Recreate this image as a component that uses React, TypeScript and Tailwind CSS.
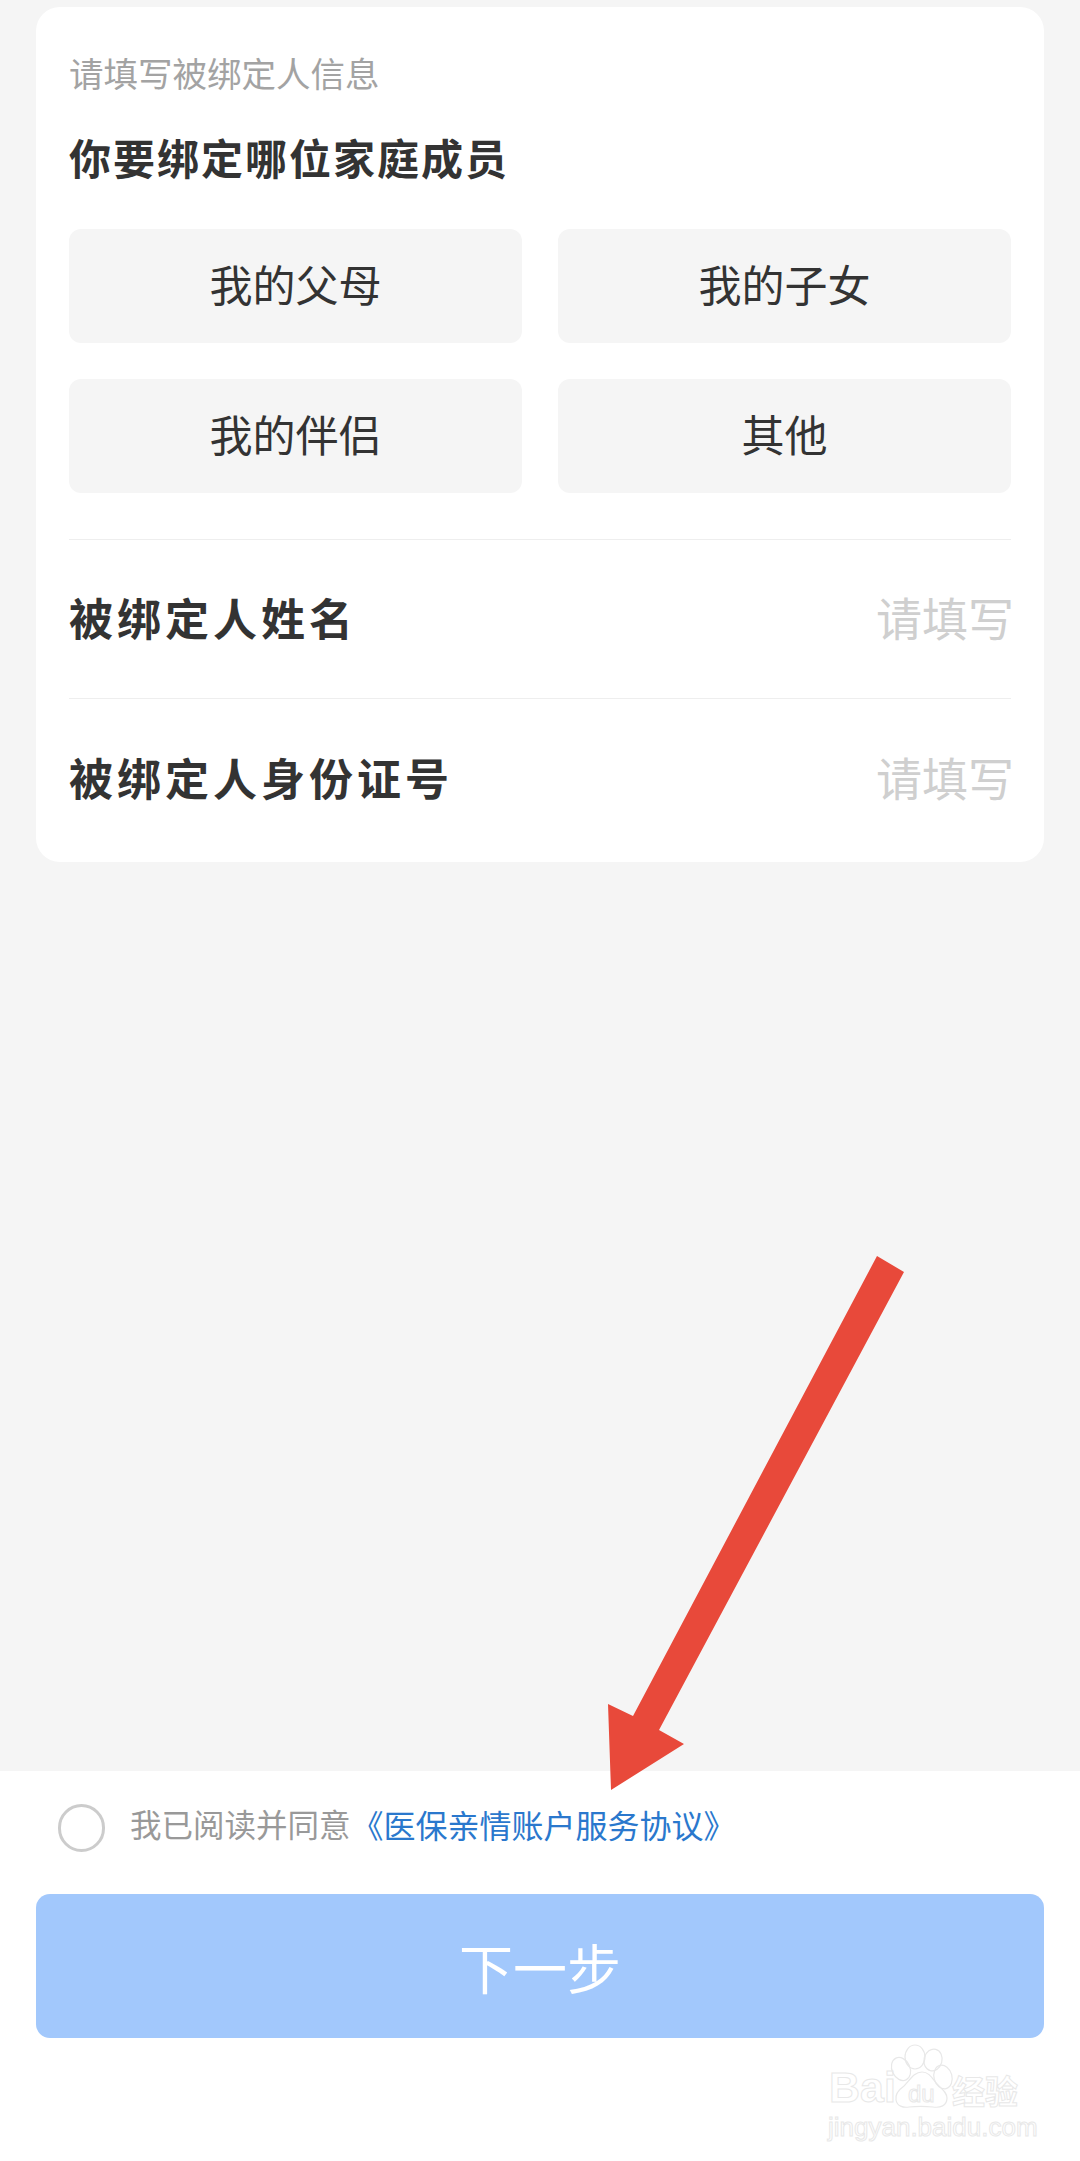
const FONT = "font-['Noto_Sans_CJK_SC','Noto_Sans',sans-serif]";

const OPTIONS = ["我的父母", "我的子女", "我的伴侣", "其他"];

function Arrow() {
  return (
    <svg className="absolute left-[600px] top-[1250px]" width="310" height="545" viewBox="600 1250 310 545" fill="#e8493a">
      <polygon points="877,1256 904,1272 659,1730 684,1744 611,1790 608,1704 633,1716" />
    </svg>
  );
}

function Watermark() {
  return (
    <div className="absolute left-[820px] top-[2040px] h-[105px] w-[210px] text-transparent [-webkit-text-stroke:1px_#e8e8e8]">
      <svg className="absolute left-0 top-0" width="210" height="105" viewBox="820 2040 210 105" fill="none" stroke="#e8e8e8" strokeWidth="1.2">
        <ellipse cx="915" cy="2057" rx="10" ry="12" />
        <ellipse cx="933" cy="2060" rx="9" ry="11" transform="rotate(15 933 2060)" />
        <ellipse cx="901" cy="2069" rx="9" ry="12" transform="rotate(-25 901 2069)" />
        <ellipse cx="943" cy="2077" rx="9" ry="12" transform="rotate(-15 943 2077)" />
        <path d="M922 2072c-8 0-12 8-18 14-7 5-9 9-8 14 1 6 7 8 13 7 8-1 15-1 24 0 7 1 14-1 14-9 0-5-4-8-9-13-5-5-8-13-16-13z" />
      </svg>
      <span className="absolute left-[9px] top-[24px] font-['Liberation_Sans',sans-serif] text-[43px] font-bold leading-[46px]">Bai</span>
      <span className="absolute left-[88px] top-[40px] font-['Liberation_Sans',sans-serif] text-[24px] leading-[28px]">du</span>
      <span className="absolute left-[132px] top-[32px] text-[33px] font-bold leading-[36px]">经验</span>
      <span className="absolute left-[8px] top-[72px] whitespace-nowrap font-['Liberation_Sans',sans-serif] text-[26px] leading-[30px]">jingyan.baidu.com</span>
    </div>
  );
}

export default function App() {
  return (
    <div className={`relative flex h-[2161px] w-[1080px] flex-col overflow-hidden bg-[#f5f5f5] ${FONT}`}>
      <div className="flex-1 px-[36px] pt-[7px]">
        <div className="h-[855px] rounded-[24px] bg-white px-[33px] pt-[43px]">
          <div className="text-[34.5px] leading-[44px] text-[#a3a3a3]">请填写被绑定人信息</div>
          <div className="mt-[37px] text-[42px] font-bold leading-[52px] tracking-[2px] text-[#333333]">你要绑定哪位家庭成员</div>

          <div className="mt-[46px] grid grid-cols-2 gap-x-[36px] gap-y-[36px]">
            {OPTIONS.map((option) => (
              <div key={option} className="flex h-[114px] items-center justify-center rounded-[12px] bg-[#f5f5f5] pb-[5px] text-[43px] text-[#333333]">
                {option}
              </div>
            ))}
          </div>

          <div className="mt-[46px] flex h-[159px] items-center justify-between border-t border-[#eeeeee] pb-[5px]">
            <span className="text-[44px] font-bold tracking-[4px] text-[#333333]">被绑定人姓名</span>
            <span className="mr-[-3px] text-[46px] text-[#cfcfcf]">请填写</span>
          </div>
          <div className="flex h-[163px] items-center justify-between border-t border-[#eeeeee] pb-[7px]">
            <span className="text-[44px] font-bold tracking-[4px] text-[#333333]">被绑定人身份证号</span>
            <span className="mr-[-3px] text-[46px] text-[#cfcfcf]">请填写</span>
          </div>
        </div>
      </div>

      <div className="h-[390px] bg-white px-[36px] pt-[33px]">
        <div className="flex h-[48px] items-center pl-[22px]">
          <div className="h-[48px] w-[47px] rounded-full border-[3px] border-[#cccccc]" />
          <span className="ml-[25px] pb-[8px] text-[31.5px] text-[#999999]">我已阅读并同意</span>
          <span className="ml-[1px] pb-[8px] text-[32px] text-[#2a78cd]">《医保亲情账户服务协议》</span>
        </div>
        <div className="mt-[42px] flex h-[144px] items-center justify-center rounded-[14px] bg-[#a2c8fc] text-[54px] text-white">
          下一步
        </div>
      </div>

      <Arrow />
      <Watermark />
    </div>
  );
}
